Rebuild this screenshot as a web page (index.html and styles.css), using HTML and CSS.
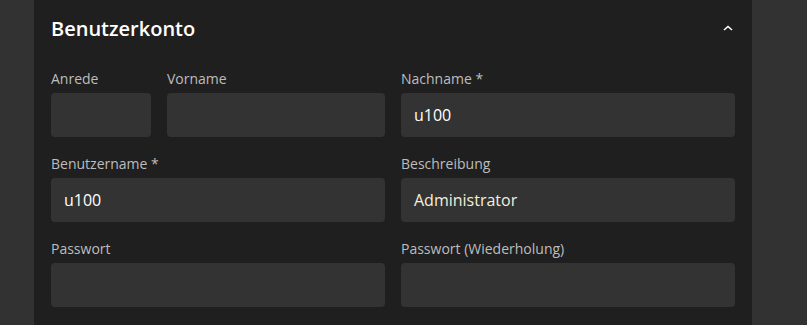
FILE: index.html
```html
<!DOCTYPE html>
<html lang="de">
<head>
<meta charset="utf-8">
<link rel="stylesheet" href="styles.css">
</head>
<body>
<div class="page">
  <section class="panel">
    <header class="panel-head">
      <h2 class="title">Benutzerkonto</h2>
      <svg class="chev" width="10" height="6" viewBox="0 0 10 6"><polyline points="1,5 5,1.5 9,5" fill="none" stroke="#fff" stroke-width="1.6"/></svg>
    </header>
    <div class="grid">
      <div class="half split">
        <div class="field small">
          <label class="label">Anrede</label>
          <div class="input"></div>
        </div>
        <div class="field grow">
          <label class="label">Vorname</label>
          <div class="input"></div>
        </div>
      </div>
      <div class="field">
        <label class="label">Nachname *</label>
        <div class="input">u100</div>
      </div>
      <div class="field">
        <label class="label">Benutzername *</label>
        <div class="input">u100</div>
      </div>
      <div class="field">
        <label class="label">Beschreibung</label>
        <div class="input cream">Administrator</div>
      </div>
      <div class="field">
        <label class="label">Passwort</label>
        <div class="input"></div>
      </div>
      <div class="field">
        <label class="label">Passwort (Wiederholung)</label>
        <div class="input"></div>
      </div>
    </div>
  </section>
</div>
</body>
</html>
```
FILE: styles.css
```css
html, body { margin: 0; padding: 0; }
body {
  background: #323232;
  font-family: "Open Sans", "Noto Sans", sans-serif;
  height: 325px;
  overflow: hidden;
}
.page { padding-left: 34px; }
.panel {
  width: 718px;
  height: 325px;
  background: #1f1f1f;
  box-sizing: border-box;
  padding: 16px 17px 0 17px;
}
.panel-head {
  display: flex;
  align-items: center;
  justify-content: space-between;
  height: 26px;
}
.title {
  margin: 0;
  font-size: 20px;
  font-weight: 600;
  color: #fff;
  line-height: 26px;
}
.chev { margin-right: 2px; margin-top: -2px; }
.grid {
  margin-top: 27px;
  display: grid;
  grid-template-columns: 334px 334px;
  column-gap: 16px;
  row-gap: 17px;
}
.split { display: flex; gap: 16px; }
.small { width: 100px; flex: none; }
.grow { flex: 1; }
.field { display: flex; flex-direction: column; }
.label {
  font-size: 14px;
  line-height: 19px;
  color: #bdbdbd;
  margin-bottom: 5px;
}
.input {
  height: 44px;
  background: #333333;
  border-radius: 4px;
  box-sizing: border-box;
  padding: 0 13px;
  display: flex;
  align-items: center;
  font-size: 16px;
  color: #fff;
}
.cream { color: #f2efdc; }
```
